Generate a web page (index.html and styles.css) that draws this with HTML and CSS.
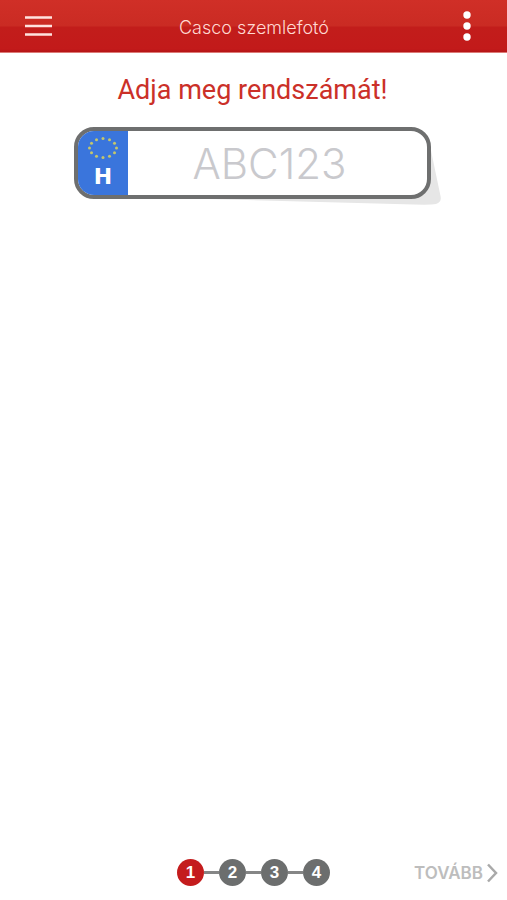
FILE: index.html
```html
<!DOCTYPE html>
<html lang="hu">
<head>
    <meta charset="UTF-8">
    <meta name="viewport" content="width=device-width, initial-scale=1.0">
    <title>Casco szemlefotó</title>
    <link rel="stylesheet" href="styles.css">
</head>
<body>

    <header class="topbar">
        <button type="button" class="icon-btn menu-btn" aria-label="Menü">
            <svg width="28" height="22" viewBox="0 0 28 22">
                <path d="M0 2.5h27M0 11h27M0 19.5h27" fill="none" stroke="#ffe3df" stroke-width="2.5"/>
            </svg>
        </button>
        <h1 class="topbar-title">Casco szemlefotó</h1>
        <button type="button" class="icon-btn more-btn" aria-label="További lehetőségek">
            <svg width="8" height="32" viewBox="0 0 8 32">
                <circle cx="4" cy="5" r="3.7" fill="#fff"/>
                <circle cx="4" cy="16" r="3.7" fill="#fff"/>
                <circle cx="4" cy="27" r="3.7" fill="#fff"/>
            </svg>
        </button>
    </header>

    <main class="content">
        <label class="question" for="rendszam">Adja meg rendszámát!</label>

        <!-- Rendszámtábla -->
        <div class="plate-wrap">
            <svg class="plate-shadow" viewBox="0 0 367 78" preserveAspectRatio="none">
                <path d="M20 69L340 77.500Q357 78 362 77Q368 75 366.500 69L355 14L340 8z" fill="#e6e6e6"/>
            </svg>
            <div class="plate">
                <div class="plate-country">
                    <svg width="32" height="24" viewBox="0 0 32 24" fill="#c3c66c">
                        <circle cx="16" cy="2.500" r="1.500"/>
                        <circle cx="22.500" cy="3.800" r="1.500"/>
                        <circle cx="27.500" cy="7.200" r="1.500"/>
                        <circle cx="29.500" cy="12" r="1.500"/>
                        <circle cx="27.500" cy="16.800" r="1.500"/>
                        <circle cx="22.500" cy="20.200" r="1.500"/>
                        <circle cx="16" cy="21.500" r="1.500"/>
                        <circle cx="9.500" cy="20.200" r="1.500"/>
                        <circle cx="4.500" cy="16.800" r="1.500"/>
                        <circle cx="2.500" cy="12" r="1.500"/>
                        <circle cx="4.500" cy="7.200" r="1.500"/>
                        <circle cx="9.500" cy="3.800" r="1.500"/>
                    </svg>
                    <span class="country-code">H</span>
                </div>
                <input type="text" id="rendszam" class="plate-input" placeholder="ABC123" maxlength="7" autocomplete="off">
            </div>
        </div>
    </main>

    <!-- Lépések -->
    <footer class="footer">
        <ol class="steps">
            <li class="step active">1</li>
            <li class="step">2</li>
            <li class="step">3</li>
            <li class="step">4</li>
        </ol>
        <button type="button" class="next-btn">
            TOVÁBB
            <svg width="12" height="20" viewBox="0 0 12 20">
                <path d="M2 1.500L10 10L2 18.500" fill="none" stroke="#a9a9a9" stroke-width="2.500"/>
            </svg>
        </button>
    </footer>

</body>
</html>
```
FILE: styles.css
```css
* {
    box-sizing: border-box;
}

body {
    font-family: Inter, "Liberation Sans", sans-serif;
    margin: 0;
    min-height: 100vh;
    display: flex;
    flex-direction: column;
    background-color: #fff;
}

button {
    border: none;
    background: none;
    padding: 0;
    cursor: pointer;
}

/* Felső sáv */
.topbar {
    display: grid;
    grid-template-columns: 1fr auto 1fr;
    align-items: center;
    height: 53px;
    padding: 0 36px 0 25px;
    background: linear-gradient(#d02f27 0, #ca2b23 26px, #c21d1b 27px, #c21a1a 49px, #b51517 100%);
    border-bottom: 1px solid #dc7a76;
}

.icon-btn svg {
    display: block;
}

.menu-btn {
    justify-self: start;
}

.more-btn {
    justify-self: end;
}

.topbar-title {
    margin: 0;
    padding: 2px 0 0 12px;
    font-size: 18px;
    font-weight: 300;
    color: #ffd9d2;
}

/* Tartalom */
.content {
    flex: 1;
    padding: 21px 76px 20px 74px;
}

.question {
    display: block;
    margin-bottom: 21px;
    font-family: Roboto, sans-serif;
    font-size: 27px;
    line-height: 32px;
    text-align: center;
    white-space: nowrap;
    color: #cb3028;
}

.plate-wrap {
    position: relative;
}

.plate-shadow {
    position: absolute;
    top: 0;
    left: 0;
    width: calc(100% + 10px);
    height: 78px;
}

.plate {
    position: relative;
    display: flex;
    height: 72px;
    border: 4px solid #6e6f6f;
    border-radius: 20px;
    background-color: #fff;
    overflow: hidden;
}

.plate-country {
    display: flex;
    flex-direction: column;
    align-items: center;
    gap: 5px;
    width: 50px;
    padding-top: 5px;
    background-color: #3a75dc;
}

.country-code {
    font-family: "DejaVu Sans", sans-serif;
    font-size: 22px;
    line-height: 24px;
    font-weight: 700;
    color: #fff;
}

.plate-input {
    flex: 1;
    min-width: 0;
    border: none;
    outline: none;
    padding: 0 16px 0 0;
    font-family: inherit;
    font-size: 42px;
    font-weight: 300;
    text-align: center;
    color: #6e6f6f;
    background: none;
}

.plate-input::placeholder {
    color: #c9c9cd;
}

/* Lábléc */
.footer {
    display: grid;
    grid-template-columns: 1fr auto 1fr;
    align-items: center;
    padding: 0 9px 14px;
}

.steps {
    grid-column: 2;
    display: flex;
    margin: 0;
    padding: 0;
    list-style: none;
}

.step {
    display: flex;
    align-items: center;
    justify-content: center;
    width: 27px;
    height: 27px;
    border-radius: 50%;
    background-color: #6c6e6e;
    color: #fff;
    font-family: "Liberation Sans", sans-serif;
    font-size: 17px;
    font-weight: 700;
    position: relative;
}

.step + .step {
    margin-left: 15px;
}

.step + .step::before {
    content: "";
    position: absolute;
    right: 100%;
    width: 15px;
    height: 3px;
    background-color: #858686;
}

.step.active {
    background-color: #c41c1d;
}

.next-btn {
    justify-self: end;
    display: flex;
    align-items: center;
    gap: 3px;
    font-family: inherit;
    font-size: 17px;
    font-weight: 600;
    color: #bdbdbd;
}
```
